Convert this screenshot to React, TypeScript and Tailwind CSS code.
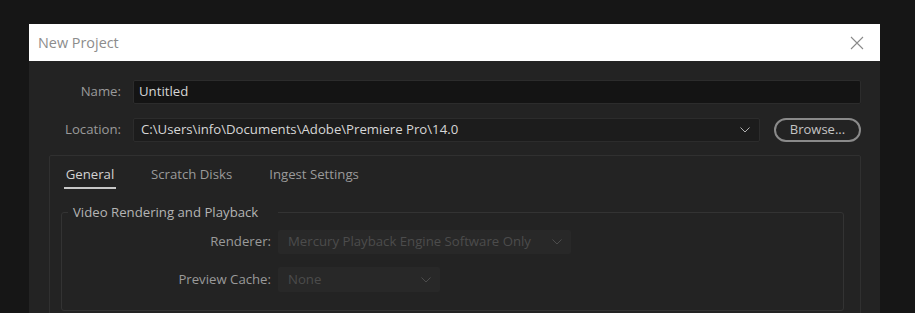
import React from "react";

const font = { fontFamily: '"Open Sans", "Noto Sans", sans-serif' };

function Chevron({ className }: { className?: string }) {
  return (
    <svg width="10" height="6" viewBox="0 0 10 6" className={className}>
      <path d="M0.5 0.5 L5 5 L9.5 0.5" fill="none" stroke="currentColor" strokeWidth="1" />
    </svg>
  );
}

export default function App() {
  return (
    <div
      className="w-[915px] h-[313px] bg-[#161616] overflow-hidden pt-[24px] pl-[29px] text-[13.2px]"
      style={font}
    >
      <div className="w-[851px] h-[289px] bg-[#232323] flex flex-col">
        {/* Title bar */}
        <div className="h-[37px] bg-white flex items-center justify-between pl-[9px] pr-[16px] shrink-0">
          <span className="text-[14.4px] text-[#8c8c8c]">New Project</span>
          <svg width="14" height="14" viewBox="0 0 14 14" className="text-[#8a8a8a]">
            <path d="M1 1 L13 13 M13 1 L1 13" stroke="currentColor" strokeWidth="1.1" />
          </svg>
        </div>

        <div className="pt-[19px] pl-[20px] pr-[19px] flex flex-col">
          {/* Name */}
          <div className="flex items-center h-[24px]">
            <span className="w-[72px] text-right text-[#9a9a9a]">Name:</span>
            <div className="ml-[12px] flex-1 h-full bg-[#141414] border border-[#2c2c2c] rounded-[2px] flex items-center px-[5px] text-[#d6d6d6]">
              Untitled
            </div>
          </div>

          {/* Location */}
          <div className="flex items-center h-[24px] mt-[14px]">
            <span className="w-[72px] text-right text-[#9a9a9a]">Location:</span>
            <div className="ml-[12px] w-[627px] h-full bg-[#1c1c1c] border border-[#2c2c2c] rounded-[2px] flex items-center justify-between pl-[7px] pr-[9px] text-[#d6d6d6]">
              <span>C:\Users\info\Documents\Adobe\Premiere Pro\14.0</span>
              <Chevron className="text-[#b0b0b0]" />
            </div>
            <button className="ml-[14px] w-[87px] h-[24px] rounded-full border-2 border-[#8a8a8a] text-[#c4c4c4] text-[13px] flex items-center justify-center">
              Browse...
            </button>
          </div>

          {/* Tab panel */}
          <div className="mt-[13px] w-[812px] h-[200px] border border-[#303030] rounded-[2px] flex flex-col">
            <div className="flex items-end pl-[14px] pt-[8px] h-[33px]">
              <div className="flex flex-col items-center">
                <span className="text-[#d2d2d2] leading-[18px]">General</span>
                <span className="mt-[4px] w-[52px] h-[2px] bg-[#c8c8c8]" />
              </div>
              <span className="ml-[35px] text-[#9a9a9a] leading-[18px] pb-[6px]">Scratch Disks</span>
              <span className="ml-[37px] text-[#9a9a9a] leading-[18px] pb-[6px]">Ingest Settings</span>
            </div>

            <fieldset className="mt-[15px] ml-[11px] w-[783px] h-[107px] border border-[#333333] rounded-[3px] px-0">
              <legend className="ml-[6px] pl-[5px] pr-[20px] text-[#b4b4b4] leading-[16px]">
                Video Rendering and Playback
              </legend>
              <div className="flex items-center h-[24px] mt-[10px]">
                <span className="w-[209px] text-right text-[#9a9a9a]">Renderer:</span>
                <div className="ml-[7px] w-[293px] h-full bg-[#282828] rounded-[2px] flex items-center justify-between pl-[10px] pr-[9px] text-[#4c4c4c]">
                  <span>Mercury Playback Engine Software Only</span>
                  <Chevron className="text-[#4c4c4c]" />
                </div>
              </div>
              <div className="flex items-center h-[25px] mt-[13px]">
                <span className="w-[209px] text-right text-[#9a9a9a]">Preview Cache:</span>
                <div className="ml-[7px] w-[162px] h-full bg-[#282828] rounded-[2px] flex items-center justify-between pl-[10px] pr-[9px] text-[#4c4c4c]">
                  <span>None</span>
                  <Chevron className="text-[#4c4c4c]" />
                </div>
              </div>
            </fieldset>
          </div>
        </div>
      </div>
    </div>
  );
}
